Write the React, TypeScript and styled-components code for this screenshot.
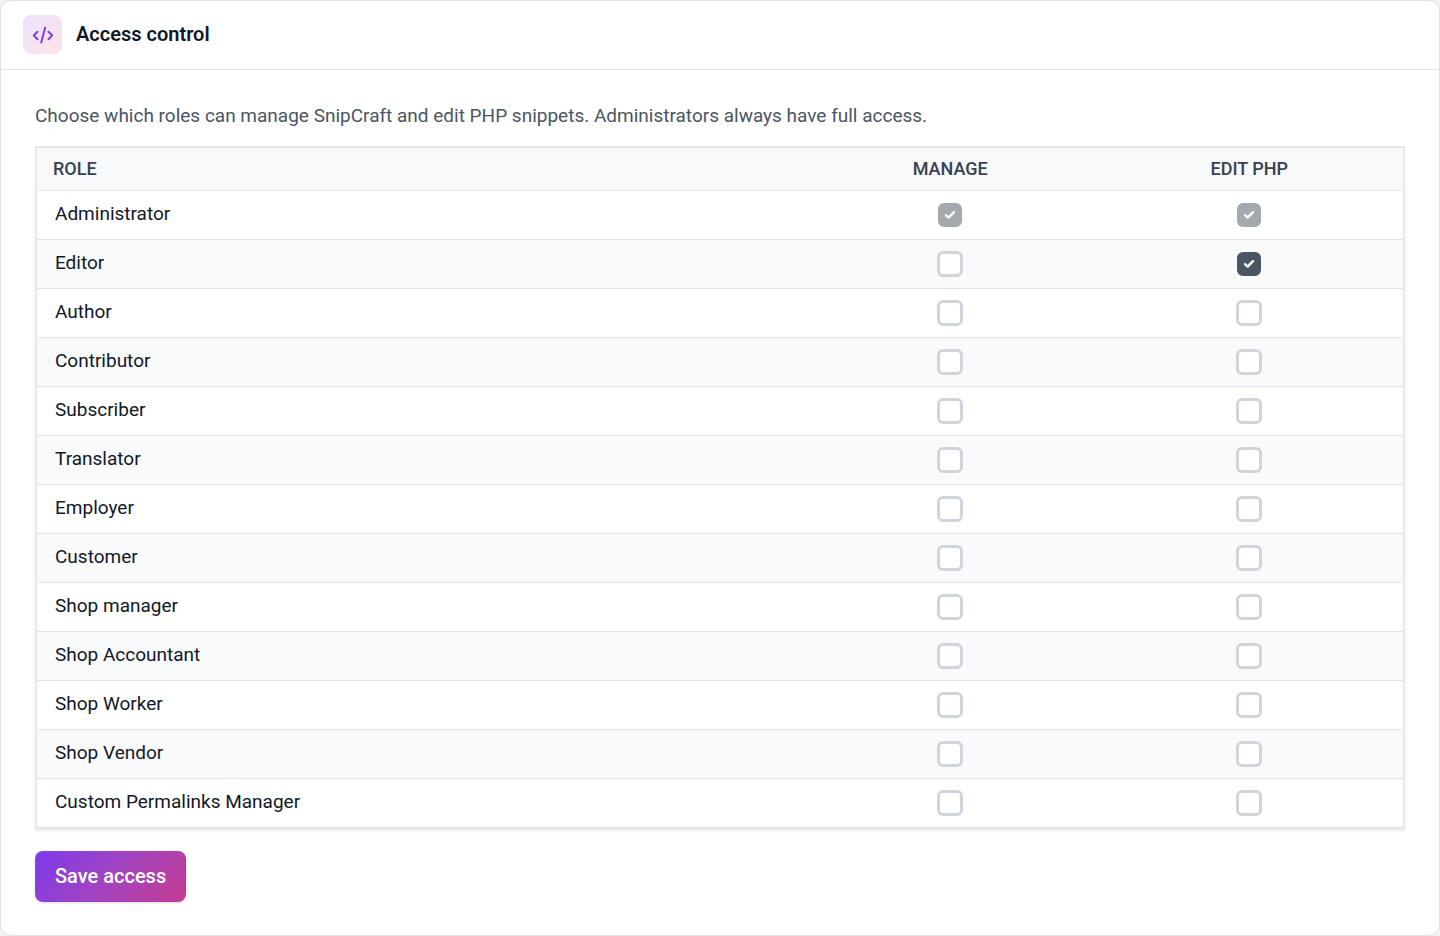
import React, { useState } from "react";
import styled, { createGlobalStyle } from "styled-components";

const GlobalStyle = createGlobalStyle`
  *, *::before, *::after { box-sizing: border-box; }
  body {
    margin: 0;
    background: #f0f0f1;
    color: #111827;
    font-family: Roboto, "Liberation Sans", sans-serif;
    font-size: 19px;
    line-height: 28px;
  }
`;

const Card = styled.main`
  display: flex;
  flex-direction: column;
  min-height: 100vh;
  background: #fff;
  border: 1px solid #e0e2e8;
  border-radius: 12px;
`;

const CardHeader = styled.header`
  display: flex;
  align-items: center;
  gap: 14px;
  padding: 14px 22px 15px;
  border-bottom: 1px solid #e0e2e8;
`;

const IconTile = styled.span`
  display: flex;
  align-items: center;
  justify-content: center;
  width: 39px;
  height: 39px;
  border-radius: 8px;
  background: linear-gradient(135deg, #ebe2fe, #fde3e6);
  color: #7c3aed;
`;

const Title = styled.h1`
  margin: 0;
  padding-bottom: 2px;
  font-size: 20px;
  line-height: 28px;
  font-weight: 600;
`;

const CardBody = styled.form`
  display: flex;
  flex-direction: column;
  align-items: flex-start;
  padding: 32px 34px;
`;

const Intro = styled.p`
  margin: 0 0 16px;
  color: #4b5563;
`;

const RoleTable = styled.table`
  width: 100%;
  table-layout: fixed;
  border-collapse: separate;
  border-spacing: 0;
  border: 2px solid #e7e9ed;
  border-bottom-width: 1px;
  box-shadow: 0 2px 3px rgba(0, 0, 0, 0.08);
`;

const HeadCell = styled.th<{ $width: string; $center?: boolean }>`
  width: ${(p) => p.$width};
  height: 43px;
  padding: 0 16px;
  background: #f8f9fb;
  border-bottom: 1px solid #e0e2e8;
  color: #374151;
  font-size: 18px;
  line-height: 24px;
  font-weight: 500;
  text-transform: uppercase;
  text-align: ${(p) => (p.$center ? "center" : "left")};
`;

const Row = styled.tr`
  background: #fff;
  &:nth-child(even) { background: #f9fafc; }
`;

const RoleCell = styled.th`
  height: 49px;
  padding: 0 18px 2px;
  border-bottom: 1px solid #e0e2e8;
  font-weight: 400;
  text-align: left;
`;

const CheckCell = styled.td`
  height: 49px;
  padding: 0;
  border-bottom: 1px solid #e0e2e8;
`;

const CheckWrap = styled.label`
  display: grid;
  place-items: center;
  width: 26px;
  margin: 0 auto;
  & > * { grid-area: 1 / 1; }
`;

const Checkbox = styled.input`
  appearance: none;
  width: 26px;
  height: 26px;
  margin: 0;
  border: 3px solid #d1d5db;
  border-radius: 6px;
  background: #fff;
  &:checked {
    width: 24px;
    height: 24px;
    border-color: #4b5563;
    background: #4b5563;
  }
  &:checked:disabled {
    border-color: #a4a8af;
    background: #a4a8af;
  }
`;

const Tick = styled.svg`
  pointer-events: none;
`;

const SaveButton = styled.button`
  margin-top: 22px;
  height: 51px;
  padding: 0 19px 2px;
  border: 1px solid transparent;
  border-radius: 8px;
  background: linear-gradient(135deg, #7c3aed, #a244c0 50%, #c63c90);
  box-shadow: 0 1px 3px rgba(0, 0, 0, 0.14);
  color: #fff;
  font: 500 20px/28px Roboto, "Liberation Sans", sans-serif;
  cursor: pointer;
`;

const roles = [
  "Administrator",
  "Editor",
  "Author",
  "Contributor",
  "Subscriber",
  "Translator",
  "Employer",
  "Customer",
  "Shop manager",
  "Shop Accountant",
  "Shop Worker",
  "Shop Vendor",
  "Custom Permalinks Manager",
];

const CodeIcon = () => (
  <svg width="22" height="20" viewBox="0 0 22 20" fill="none" stroke="currentColor" strokeWidth="2" strokeLinecap="round" strokeLinejoin="round" aria-hidden="true">
    <path d="M5.5 6.8 1.8 10.4l3.7 3.8M16.5 6.8l3.7 3.6-3.7 3.8M13.2 2.6 9.2 17.6" />
  </svg>
);

function AccessCheckbox({ label, initial, locked }: { label: string; initial: boolean; locked: boolean }) {
  const [checked, setChecked] = useState(initial);
  return (
    <CheckWrap>
      <Checkbox
        type="checkbox"
        aria-label={label}
        checked={checked}
        disabled={locked}
        onChange={(e) => setChecked(e.target.checked)}
      />
      {checked && (
        <Tick width="12" height="10" viewBox="0 0 12 10" fill="none" stroke="#fff" strokeWidth="2.4" strokeLinecap="round" strokeLinejoin="round" aria-hidden="true">
          <path d="M2 5.2 4.6 7.6 10 2.2" />
        </Tick>
      )}
    </CheckWrap>
  );
}

export default function App() {
  return (
    <>
      <GlobalStyle />
      <Card>
        <CardHeader>
          <IconTile><CodeIcon /></IconTile>
          <Title>Access control</Title>
        </CardHeader>
        <CardBody onSubmit={(e) => e.preventDefault()}>
          <Intro>
            Choose which roles can manage SnipCraft and edit PHP snippets. Administrators always have full access.
          </Intro>
          <RoleTable>
            <thead>
              <tr>
                <HeadCell scope="col" $width="56.2%">Role</HeadCell>
                <HeadCell scope="col" $width="21.3%" $center>Manage</HeadCell>
                <HeadCell scope="col" $width="22.5%" $center>Edit PHP</HeadCell>
              </tr>
            </thead>
            <tbody>
              {roles.map((role) => {
                const admin = role === "Administrator";
                return (
                  <Row key={role}>
                    <RoleCell scope="row">{role}</RoleCell>
                    <CheckCell>
                      <AccessCheckbox label={`${role}: manage`} initial={admin} locked={admin} />
                    </CheckCell>
                    <CheckCell>
                      <AccessCheckbox label={`${role}: edit PHP`} initial={admin || role === "Editor"} locked={admin} />
                    </CheckCell>
                  </Row>
                );
              })}
            </tbody>
          </RoleTable>
          <SaveButton type="submit">Save access</SaveButton>
        </CardBody>
      </Card>
    </>
  );
}
